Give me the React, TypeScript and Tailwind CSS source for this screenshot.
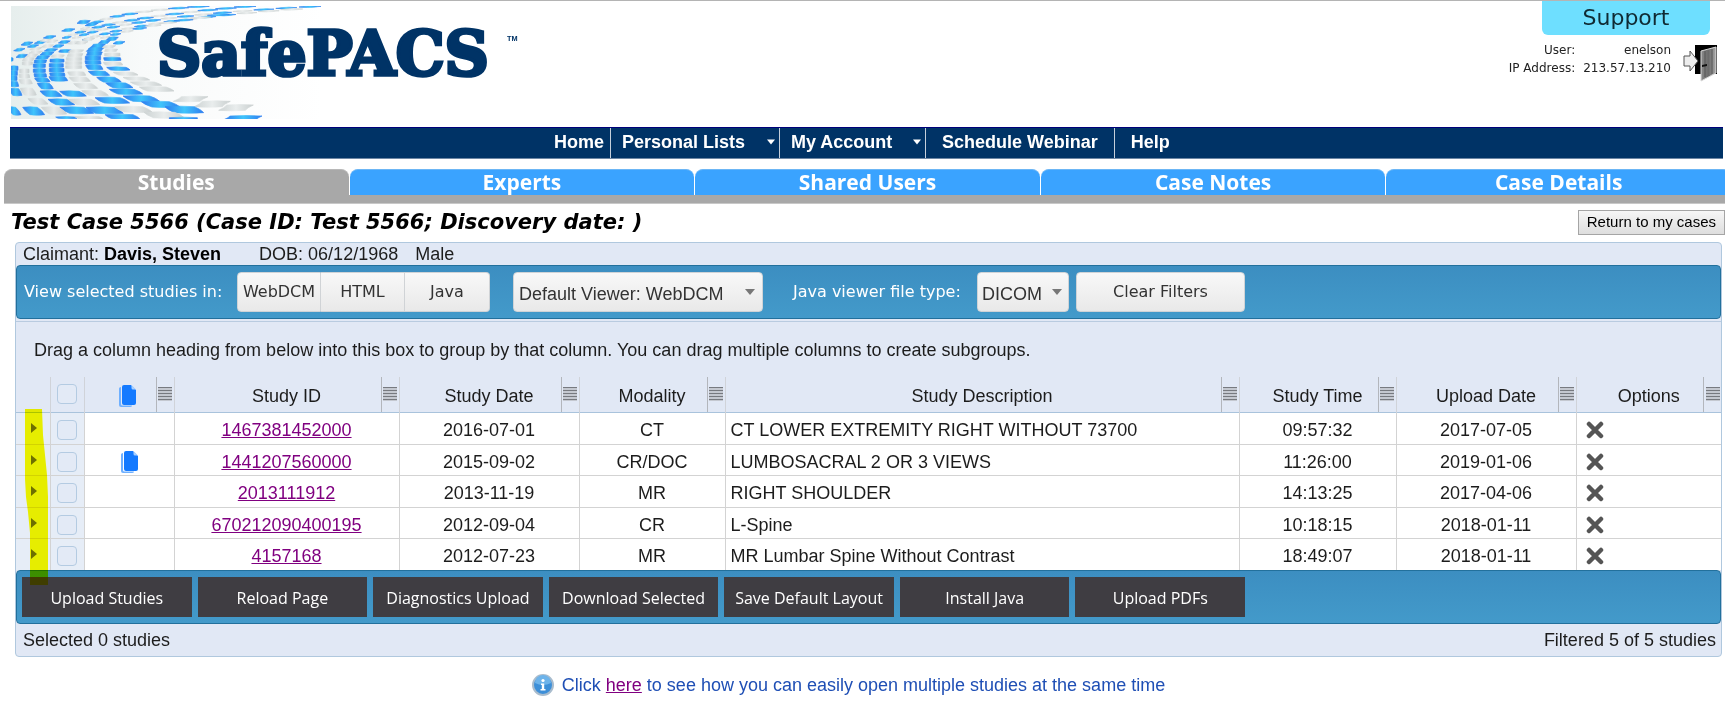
import { useState } from 'react';

type Tile = [number, number, number, number, number, string];

// cx, cy, half width, half height, skew, colour
const tiles: Tile[] = [
  [322, 116, 14, 4, -4, 'b'], [298, 126, 14, 4, -4, 'b'], [278, 138, 18, 5, -5, 'b'],
  [270, 149, 22, 5, -4, 'b'], [268, 161, 22, 5, -2, 'b'], [264, 174, 23, 5, 0, 'b'],
  [264, 187, 23, 5, 1, 'b'], [268, 202, 22, 6, 4, 'b'], [282, 220, 25, 6, 7, 'b'],
  [312, 239, 27, 7, 10, 'b'], [343, 256, 30, 7, 11, 'b'], [363, 275, 37, 7, 13, 'b'],
  [409, 296, 40, 8, 15, 'b'], [467, 313, 42, 8, 16, 'b'],
  [342, 128, 14, 3, -4, 'b'], [312, 140, 16, 3, -4, 'g'], [318, 151, 18, 3, -2, 'g'],
  [322, 164, 23, 4, 0, 'g'], [322, 177, 25, 4, 1, 'b'], [324, 191, 26, 4, 3, 'g'],
  [340, 206, 29, 4, 6, 'b'], [362, 221, 29, 4, 8, 'g'], [394, 236, 31, 4, 9, 'g'],
  [423, 251, 36, 5, 11, 'g'], [455, 267, 40, 6, 12, 'g'],
  [178, 126, 14, 3, -4, 'b'], [160, 138, 13, 3, -4, 'b'], [138, 150, 16, 3, -4, 'b'],
  [126, 161, 17, 4, -4, 'b'], [113, 172, 18, 4, -3, 'b'], [106, 184, 18, 4, -1, 'b'],
  [103, 197, 18, 5, 0, 'b'], [103, 212, 18, 5, 0, 'b'], [106, 226, 18, 5, 1, 'b'],
  [112, 240, 19, 5, 4, 'b'], [121, 258, 18, 8, 6, 'b'], [138, 281, 24, 8, 9, 'b'],
  [169, 306, 28, 8, 12, 'b'], [215, 331, 36, 9, 15, 'b'],
  [180, 153, 17, 3, -2, 'b'], [158, 168, 18, 3, -2, 'g'], [156, 182, 21, 4, 0, 'b'],
  [154, 196, 21, 5, 0, 'b'], [155, 210, 22, 5, 0, 'b'], [160, 236, 24, 6, 4, 'b'],
  [157, 223, 22, 4, 1, 'b'],
  [213, 153, 20, 3, -3, 'g'], [210, 165, 22, 4, -2, 'g'], [207, 177, 23, 4, 0, 'g'],
  [206, 189, 24, 4, 0, 'g'], [206, 201, 24, 4, 0, 'g'], [215, 221, 24, 5, 3, 'g'],
  [224, 238, 26, 6, 6, 'g'], [242, 258, 27, 7, 9, 'g'], [204, 281, 29, 7, 11, 'b'],
  [270, 279, 29, 7, 11, 'g'], [237, 306, 34, 8, 13, 'g'], [322, 301, 38, 8, 14, 'b'],
  [299, 331, 42, 9, 14, 'b'], [385, 328, 42, 8, 14, 'g'],
  [92, 146, 14, 3, -4, 'g'], [92, 157, 16, 3, -4, 'g'], [78, 167, 17, 4, -3, 'g'],
  [70, 178, 16, 4, -2, 'g'], [67, 190, 15, 4, 0, 'g'], [58, 213, 14, 5, 0, 'g'],
  [58, 228, 15, 5, 1, 'g'], [62, 245, 17, 6, 3, 'g'], [70, 275, 18, 10, 6, 'g'],
  [99, 304, 21, 8, 9, 'g'], [147, 332, 26, 10, 12, 'g'], [86, 333, 22, 11, 11, 'b'],
  [27, 205, 12, 6, 0, 'b'], [25, 220, 12, 6, 0, 'b'], [24, 235, 12, 6, 0, 'b'],
  [27, 252, 12, 7, 2, 'b'], [32, 276, 14, 10, 5, 'b'], [28, 333, 12, 11, 8, 'b'],
  [18, 178, 6, 4, 0, 'b'], [50, 168, 13, 4, -4, 'b'], [43, 149, 12, 3, -5, 'b'],
  [66, 131, 13, 4, -5, 'b'], [84, 138, 12, 3, -5, 'b'], [106, 127, 13, 3, -5, 'b'],
  [122, 120, 12, 3, -5, 'g'], [134, 111, 14, 3, -5, 'b'], [142, 124, 12, 3, -5, 'g'],
  [190, 90, 15, 3, -5, 'b'], [236, 66, 16, 4, -4, 'b'], [262, 72, 14, 3, -4, 'b'],
  [128, 138, 14, 3, -4, 'g'], [205, 128, 14, 3, -4, 'g'], [230, 128, 15, 3, -4, 'g'],
  [250, 118, 15, 3, -4, 'g'], [184, 353, 28, 2, 4, 'b'], [252, 353, 36, 3, 6, 'g'],
  [352, 350, 42, 6, 10, 'b'], [557, 297, 40, 7, -12, 'g'], [622, 312, 42, 8, -12, 'g'],
  [693, 323, 40, 8, -12, 'g'], [538, 329, 44, 9, 14, 'b'], [477, 345, 46, 8, 14, 'g'],
  [715, 353, 48, 5, -8, 'b'], [535, 355, 42, 2, 0, 'b'],
];

// start, control and end point of each strand at the top of the swirl
const strands = [
  { p: [240, 85, 300, 38, 580, 20], n: 10, c: 'gbbgbbggbb' },
  { p: [185, 112, 310, 55, 720, 20], n: 15, c: 'bgbgbbgbbgbgbbb' },
  { p: [215, 112, 370, 50, 915, 20], n: 16, c: 'gbbgbgbbgbgbgbbb' },
  { p: [245, 118, 400, 62, 860, 28], n: 14, c: 'bgbbgbgbgbbggg' },
  { p: [300, 112, 420, 75, 640, 45], n: 9, c: 'gbgbggbgb' },
];

function strandTiles(): Tile[] {
  return strands.flatMap(({ p, n, c }) =>
    Array.from({ length: n }, (_, i): Tile => {
      const t = i / (n - 1);
      const a = (1 - t) * (1 - t);
      const b = 2 * t * (1 - t);
      const d = t * t;
      return [
        a * p[0] + b * p[2] + d * p[4],
        a * p[1] + b * p[3] + d * p[5],
        10 + t * 15,
        2 - t,
        -4 - t * 4,
        c[i],
      ];
    }),
  );
}

function Logo() {
  return (
    <svg width="520" height="113" viewBox="0 0 1560 339" role="img" aria-label="SafePACS">
      <defs>
        <linearGradient id="blue">
          <stop offset="0" stopColor="#2f7df0" />
          <stop offset=".5" stopColor="#3fc4fb" />
          <stop offset="1" stopColor="#2f7df0" />
        </linearGradient>
        <linearGradient id="grey">
          <stop offset="0" stopColor="#cdd3d3" />
          <stop offset=".5" stopColor="#e9eded" />
          <stop offset="1" stopColor="#c9cfcf" />
        </linearGradient>
        <linearGradient id="wash">
          <stop offset="0" stopColor="#e6eeed" />
          <stop offset=".25" stopColor="#f8fafa" />
          <stop offset=".6" stopColor="#ffffff" />
        </linearGradient>
      </defs>
      <rect width="1560" height="339" fill="url(#wash)" />
      <g transform="translate(-18 -18)" strokeWidth="2" strokeLinejoin="round">
        {[...strandTiles(), ...tiles].map(([x, y, w, h, s, c], i) => {
          const paint = c === 'b' ? 'url(#blue)' : 'url(#grey)';
          return (
            <path
              key={i}
              d={`M${x - w - s} ${y - h}Q${x - s} ${y - h - 3} ${x + w - s} ${y - h}Q${x + w + s / 2} ${y} ${x + w + s} ${y + h}Q${x + s} ${y + h + 3} ${x - w + s} ${y + h}Q${x - w - s / 2} ${y} ${x - w - s} ${y - h}Z`}
              fill={paint}
              stroke={paint}
            />
          );
        })}
      </g>
      <text
        x="438"
        y="208"
        fontSize="184"
        fontWeight="700"
        fill="#003366"
        stroke="#003366"
        strokeWidth="11"
        fontFamily="'DejaVu Serif', serif"
      >
        SafePACS
      </text>
      <text x="1488" y="104" fontSize="22" fontWeight="700" fill="#003366" fontFamily="'Liberation Sans', sans-serif">
        TM
      </text>
    </svg>
  );
}

function DoorIcon() {
  return (
    <svg width="34" height="37" viewBox="0 0 34 37" aria-hidden="true">
      <defs>
        <linearGradient id="door">
          <stop offset="0" stopColor="#8a8a8a" />
          <stop offset=".5" stopColor="#6b6b6b" />
          <stop offset="1" stopColor="#a8a8a8" />
        </linearGradient>
      </defs>
      <path d="M12 0h22v29H12z" fill="#000" />
      <path d="M18 6 33 2v26L18 36z" fill="url(#door)" stroke="#d8d8d8" />
      <path d="M22 6v26M29 4v25" stroke="#555" />
      <path d="M19 20l5-1v2l-5 1z" fill="#111" />
      <path d="M1 11h6V6l8 10-8 10v-5H1z" fill="#ededed" stroke="#555" />
    </svg>
  );
}

function PagesIcon() {
  return (
    <svg width="17" height="22" viewBox="0 0 17 22" className="inline-block" aria-hidden="true">
      <path d="M0 3.500Q0 2 2 2v17q0 1.500 1.500 1.500H13q0 1.500-2 1.500H2q-2 0-2-2z" fill="#6fb0ff" />
      <path d="M3 2q0-2 2-2h7l5 5v13q0 2-2 2H5q-2 0-2-2z" fill="#147aff" />
      <path d="M12.500 0 17 4.500h-3q-1.500 0-1.500-1.500z" fill="#a9d0ff" />
    </svg>
  );
}

function GripIcon() {
  return (
    <svg width="14" height="14" viewBox="0 0 14 14" aria-hidden="true">
      <rect width="14" height="14" fill="#c4c8d0" />
      {[0, 3, 6, 9, 12].map((y) => (
        <rect key={y} y={y} width="14" height="1" fill="#777a80" />
      ))}
    </svg>
  );
}

function CrossIcon() {
  return (
    <svg width="18" height="18" viewBox="0 0 18 18" aria-hidden="true">
      <path d="M3 3l12 12M15 3L3 15" stroke="#555" strokeWidth="4.500" strokeLinecap="round" />
    </svg>
  );
}

function Caret({ className }: { className: string }) {
  return (
    <svg width="10" height="6" viewBox="0 0 10 6" className={className} aria-hidden="true">
      <path d="M0 0h10L5 6z" fill="currentColor" />
    </svg>
  );
}

const menu = [
  { label: 'Home', className: 'pr-[6px]' },
  { label: 'Personal Lists', className: 'w-[169px] pl-[11px]', caret: true },
  { label: 'My Account', className: 'w-[146px] pl-[11px]', caret: true },
  { label: 'Schedule Webinar', className: 'px-4' },
  { label: 'Help', className: 'pl-4' },
];

const tabs = ['Studies', 'Experts', 'Shared Users', 'Case Notes', 'Case Details'];

const columns = [
  { label: 'Study ID', width: 'w-[225px]' },
  { label: 'Study Date', width: 'w-[180px]' },
  { label: 'Modality', width: 'w-[146px]' },
  { label: 'Study Description', width: '' },
  { label: 'Study Time', width: 'w-[157px]' },
  { label: 'Upload Date', width: 'w-[180px]' },
  { label: 'Options', width: 'w-[145px]' },
];

const studies = [
  { id: '1467381452000', date: '2016-07-01', modality: 'CT', description: 'CT LOWER EXTREMITY RIGHT WITHOUT 73700', time: '09:57:32', uploaded: '2017-07-05', docs: false },
  { id: '1441207560000', date: '2015-09-02', modality: 'CR/DOC', description: 'LUMBOSACRAL 2 OR 3 VIEWS', time: '11:26:00', uploaded: '2019-01-06', docs: true },
  { id: '2013111912', date: '2013-11-19', modality: 'MR', description: 'RIGHT SHOULDER', time: '14:13:25', uploaded: '2017-04-06', docs: false },
  { id: '670212090400195', date: '2012-09-04', modality: 'CR', description: 'L-Spine', time: '10:18:15', uploaded: '2018-01-11', docs: false },
  { id: '4157168', date: '2012-07-23', modality: 'MR', description: 'MR Lumbar Spine Without Contrast', time: '18:49:07', uploaded: '2018-01-11', docs: false },
];

const actions = [
  'Upload Studies',
  'Reload Page',
  'Diagnostics Upload',
  'Download Selected',
  'Save Default Layout',
  'Install Java',
  'Upload PDFs',
];

const checkbox =
  'block mx-auto appearance-none w-5 h-5 rounded border border-[#b4cbe2] bg-[#e3eaf6] checked:bg-[#3d8fc1]';
const lightButton =
  'h-10 border border-[#d0d3d6] bg-linear-to-b from-[#f8f8f8] to-[#e9e9e9] text-[#333]';
const toolbar =
  'flex items-center h-[54px] rounded border border-[#22709c] bg-linear-to-b from-[#3c8ec1] to-[#439aca]';

function Grip({ label }: { label: string }) {
  return (
    <button
      type="button"
      aria-label={label}
      className="absolute right-0 top-0 h-full w-[18px] flex items-center justify-center border-l border-[#b3b6bc]"
    >
      <GripIcon />
    </button>
  );
}

export default function App() {
  const [selected, setSelected] = useState<string[]>([]);

  function toggle(id: string) {
    setSelected((s) => (s.includes(id) ? s.filter((x) => x !== id) : [...s, id]));
  }

  return (
    <div className="overflow-hidden border-t border-[#b4b4b4] bg-white text-black text-[18px] leading-6 font-['Liberation_Sans',Arial,sans-serif]">
      <header className="flex justify-between items-start h-[126px] pl-[11px] pr-2">
        <div className="pt-[5px]">
          <Logo />
        </div>
        <div className="flex flex-col items-end font-['DejaVu_Sans',Verdana,sans-serif]">
          <a
            href="#support"
            className="flex items-center justify-center w-[168px] h-[34px] mr-[7px] rounded-b-md bg-[#6edfff] text-[22px] text-[#102a33]"
          >
            Support
          </a>
          <div className="flex items-start gap-3 pt-[6px]">
            <dl className="grid grid-cols-[auto_auto] gap-x-2 text-right text-xs leading-[18px] text-[#222]">
              <dt>User:</dt>
              <dd>enelson</dd>
              <dt>IP Address:</dt>
              <dd>213.57.13.210</dd>
            </dl>
            <a href="#logout" aria-label="Log out" className="pt-1">
              <DoorIcon />
            </a>
          </div>
        </div>
      </header>

      <nav className="flex h-8 ml-[10px] mr-[2px] pl-[544px] border-t border-b border-t-[#00007a] border-b-[#6d87a5] bg-[#003366] text-white font-bold divide-x divide-[#c5cfdb]">
        {menu.map((m) => (
          <a key={m.label} href="#menu" className={`flex items-center justify-between pb-[2px] ${m.className}`}>
            {m.label}
            {m.caret && <Caret className="w-2 mr-1" />}
          </a>
        ))}
      </nav>

      <div className="mt-[10px] ml-1 -mr-[6px] h-[35px] bg-[#a8a8a8] border-b border-[#c8c8c8]">
        <div className="flex gap-px bg-white">
          {tabs.map((t, i) => (
            <button
              key={t}
              type="button"
              className={`flex-1 h-[26px] rounded-t-lg border-t text-[21px] leading-[25px] font-bold text-white font-['Open_Sans',sans-serif] ${
                i === 0 ? 'bg-[#a8a8a8] border-[#b8b8b8]' : 'bg-[#3aa3ff] border-[#6cb6f5]'
              }`}
            >
              {t}
            </button>
          ))}
        </div>
      </div>

      <div className="flex items-center justify-between h-[38px] pl-[11px] pb-[2px]">
        <h1 className="text-[21px] font-bold italic font-['DejaVu_Sans',Verdana,sans-serif]">
          Test Case 5566 (Case ID: Test 5566; Discovery date: )
        </h1>
        <button
          type="button"
          className="h-[25px] px-2 border border-[#a5a5a5] bg-linear-to-b from-[#f6f6f6] to-[#dedede] text-[15px] leading-[22px]"
        >
          Return to my cases
        </button>
      </div>

      <main className="relative ml-[15px] mr-[3px] rounded border border-[#b0c8de] bg-[#e1e8f5] text-[#1c1c1c]">
        <div className="flex h-[22px] items-center pl-[7px] whitespace-pre">
          <span>
            Claimant: <b className="text-black">Davis, Steven</b>
          </span>
          <span className="pl-[38px]">DOB: 06/12/1968</span>
          <span className="pl-[17px]">Male</span>
        </div>

        <div className={`${toolbar} pl-[7px] text-base font-['DejaVu_Sans',Verdana,sans-serif]`}>
          <span className="w-[213px] text-white">View selected studies in:</span>
          <div className="flex">
            <button type="button" className={`${lightButton} w-[84px] rounded-l`}>WebDCM</button>
            <button type="button" className={`${lightButton} w-[84px] border-l-0`}>HTML</button>
            <button type="button" className={`${lightButton} w-[85px] border-l-0 rounded-r`}>Java</button>
          </div>
          <div className="relative ml-[23px]">
            <select
              aria-label="Default viewer"
              className={`${lightButton} appearance-none w-[250px] rounded pl-[5px] pt-1 text-[18px] font-['Liberation_Sans',Arial,sans-serif]`}
            >
              <option>Default Viewer: WebDCM</option>
              <option>Default Viewer: HTML</option>
              <option>Default Viewer: Java</option>
            </select>
            <Caret className="absolute right-2 top-[17px] text-[#777] pointer-events-none" />
          </div>
          <label htmlFor="file-type" className="ml-[30px] w-[184px] text-white">
            Java viewer file type:
          </label>
          <div className="relative">
            <select
              id="file-type"
              className={`${lightButton} appearance-none w-[92px] rounded pl-1 pt-1 text-[18px] font-['Liberation_Sans',Arial,sans-serif]`}
            >
              <option>DICOM</option>
              <option>JPEG</option>
            </select>
            <Caret className="absolute right-[7px] top-[17px] text-[#777] pointer-events-none" />
          </div>
          <button type="button" className={`${lightButton} ml-[7px] w-[169px] rounded`}>
            Clear Filters
          </button>
        </div>

        <div className="mt-[2px] h-14 border-t border-[#b9cbe0] pl-[18px] leading-[57px]">
          Drag a column heading from below into this box to group by that column. You can drag multiple columns to create subgroups.
        </div>

        <table className="w-full table-fixed border-collapse text-center">
          <thead>
            <tr className="h-[35px] border-b border-[#a9c3dc]">
              <th className="w-[34px] border-r border-[#d0d3d9]" aria-label="Expand" />
              <th className="w-[34px] border-r border-[#d0d3d9] p-0">
                <input
                  type="checkbox"
                  aria-label="Select all"
                  className={checkbox}
                  checked={selected.length === studies.length}
                  onChange={(e) => setSelected(e.target.checked ? studies.map((s) => s.id) : [])}
                />
              </th>
              <th className="relative w-[90px] border-r border-[#d0d3d9] p-0 pr-1" aria-label="Documents">
                <span className="flex justify-center pt-1">
                  <PagesIcon />
                </span>
                <Grip label="Documents column menu" />
              </th>
              {columns.map((c) => (
                <th
                  key={c.label}
                  className={`relative border-r border-[#d0d3d9] last:border-r-0 p-0 pt-1 font-normal ${c.width}`}
                >
                  {c.label}
                  <Grip label={`${c.label} column menu`} />
                </th>
              ))}
            </tr>
          </thead>
          <tbody className="bg-white">
            {studies.map((s) => (
              <tr
                key={s.id}
                className="odd:h-8 even:h-[31px] border-b border-[#d3d3d3] last:border-b-0 *:border-r *:border-[#d3d3d3] *:last:border-r-0 *:p-0 *:pt-1"
              >
                <td className="bg-[#e6edf7]">
                  <button type="button" aria-label={`Expand ${s.id}`} className="block ml-[15px] -mt-1">
                    <svg width="6" height="10" viewBox="0 0 6 10" aria-hidden="true">
                      <path d="M0 0v10l6-5z" fill="#6d7076" />
                    </svg>
                  </button>
                </td>
                <td className="bg-[#e6edf7]">
                  <input
                    type="checkbox"
                    aria-label={`Select ${s.id}`}
                    className={checkbox}
                    checked={selected.includes(s.id)}
                    onChange={() => toggle(s.id)}
                  />
                </td>
                <td>
                  {s.docs && (
                    <span className="flex justify-center">
                      <PagesIcon />
                    </span>
                  )}
                </td>
                <td>
                  <a href="#study" className="text-[#800080] underline">{s.id}</a>
                </td>
                <td>{s.date}</td>
                <td>{s.modality}</td>
                <td className="text-left">
                  <span className="pl-[5px]">{s.description}</span>
                </td>
                <td>{s.time}</td>
                <td>{s.uploaded}</td>
                <td>
                  <button type="button" aria-label={`Delete ${s.id}`} className="block ml-[9px]">
                    <CrossIcon />
                  </button>
                </td>
              </tr>
            ))}
          </tbody>
        </table>

        <div className={`${toolbar} pl-[5px]`}>
          <div className="flex gap-[6px] w-[1223px]">
            {actions.map((a) => (
              <button
                key={a}
                type="button"
                className="flex-1 h-10 pt-[2px] bg-[#3f3d42] text-base text-white whitespace-nowrap font-['Open_Sans',sans-serif]"
              >
                {a}
              </button>
            ))}
          </div>
        </div>

        <div className="flex items-center justify-between h-8 pl-[7px] pr-[5px]">
          <span>Selected {selected.length} studies</span>
          <span>Filtered {studies.length} of {studies.length} studies</span>
        </div>

        <svg
          width="24"
          height="177"
          viewBox="0 0 24 177"
          className="absolute left-[9px] top-[166px] mix-blend-multiply pointer-events-none"
          aria-hidden="true"
        >
          <path d="M0 0h17l1 26 4 40 1 22v88H5v-52L3 103 1 88 0 70z" fill="#ffff00" />
        </svg>
      </main>

      <p className="flex items-center justify-center gap-2 mt-4 pr-7 text-[#1f4fb5]">
        <svg width="22" height="24" viewBox="0 0 22 24" aria-hidden="true">
          <circle cx="11" cy="12" r="10" fill="#3d8fd8" stroke="#a9bccd" strokeWidth="2" />
          <path d="M3 10a8 8 0 0 1 16 0q-8 4-16 0z" fill="#6db3ea" />
          <circle cx="11" cy="7.500" r="1.600" fill="#fff" />
          <path d="M9 10.500h3.200V16H13.500v1.500h-5V16h1.300v-4H9z" fill="#fff" />
        </svg>
        <span>
          Click <a href="#help" className="text-[#800080] underline">here</a> to see how you can easily open multiple studies at the same time
        </span>
      </p>
    </div>
  );
}
